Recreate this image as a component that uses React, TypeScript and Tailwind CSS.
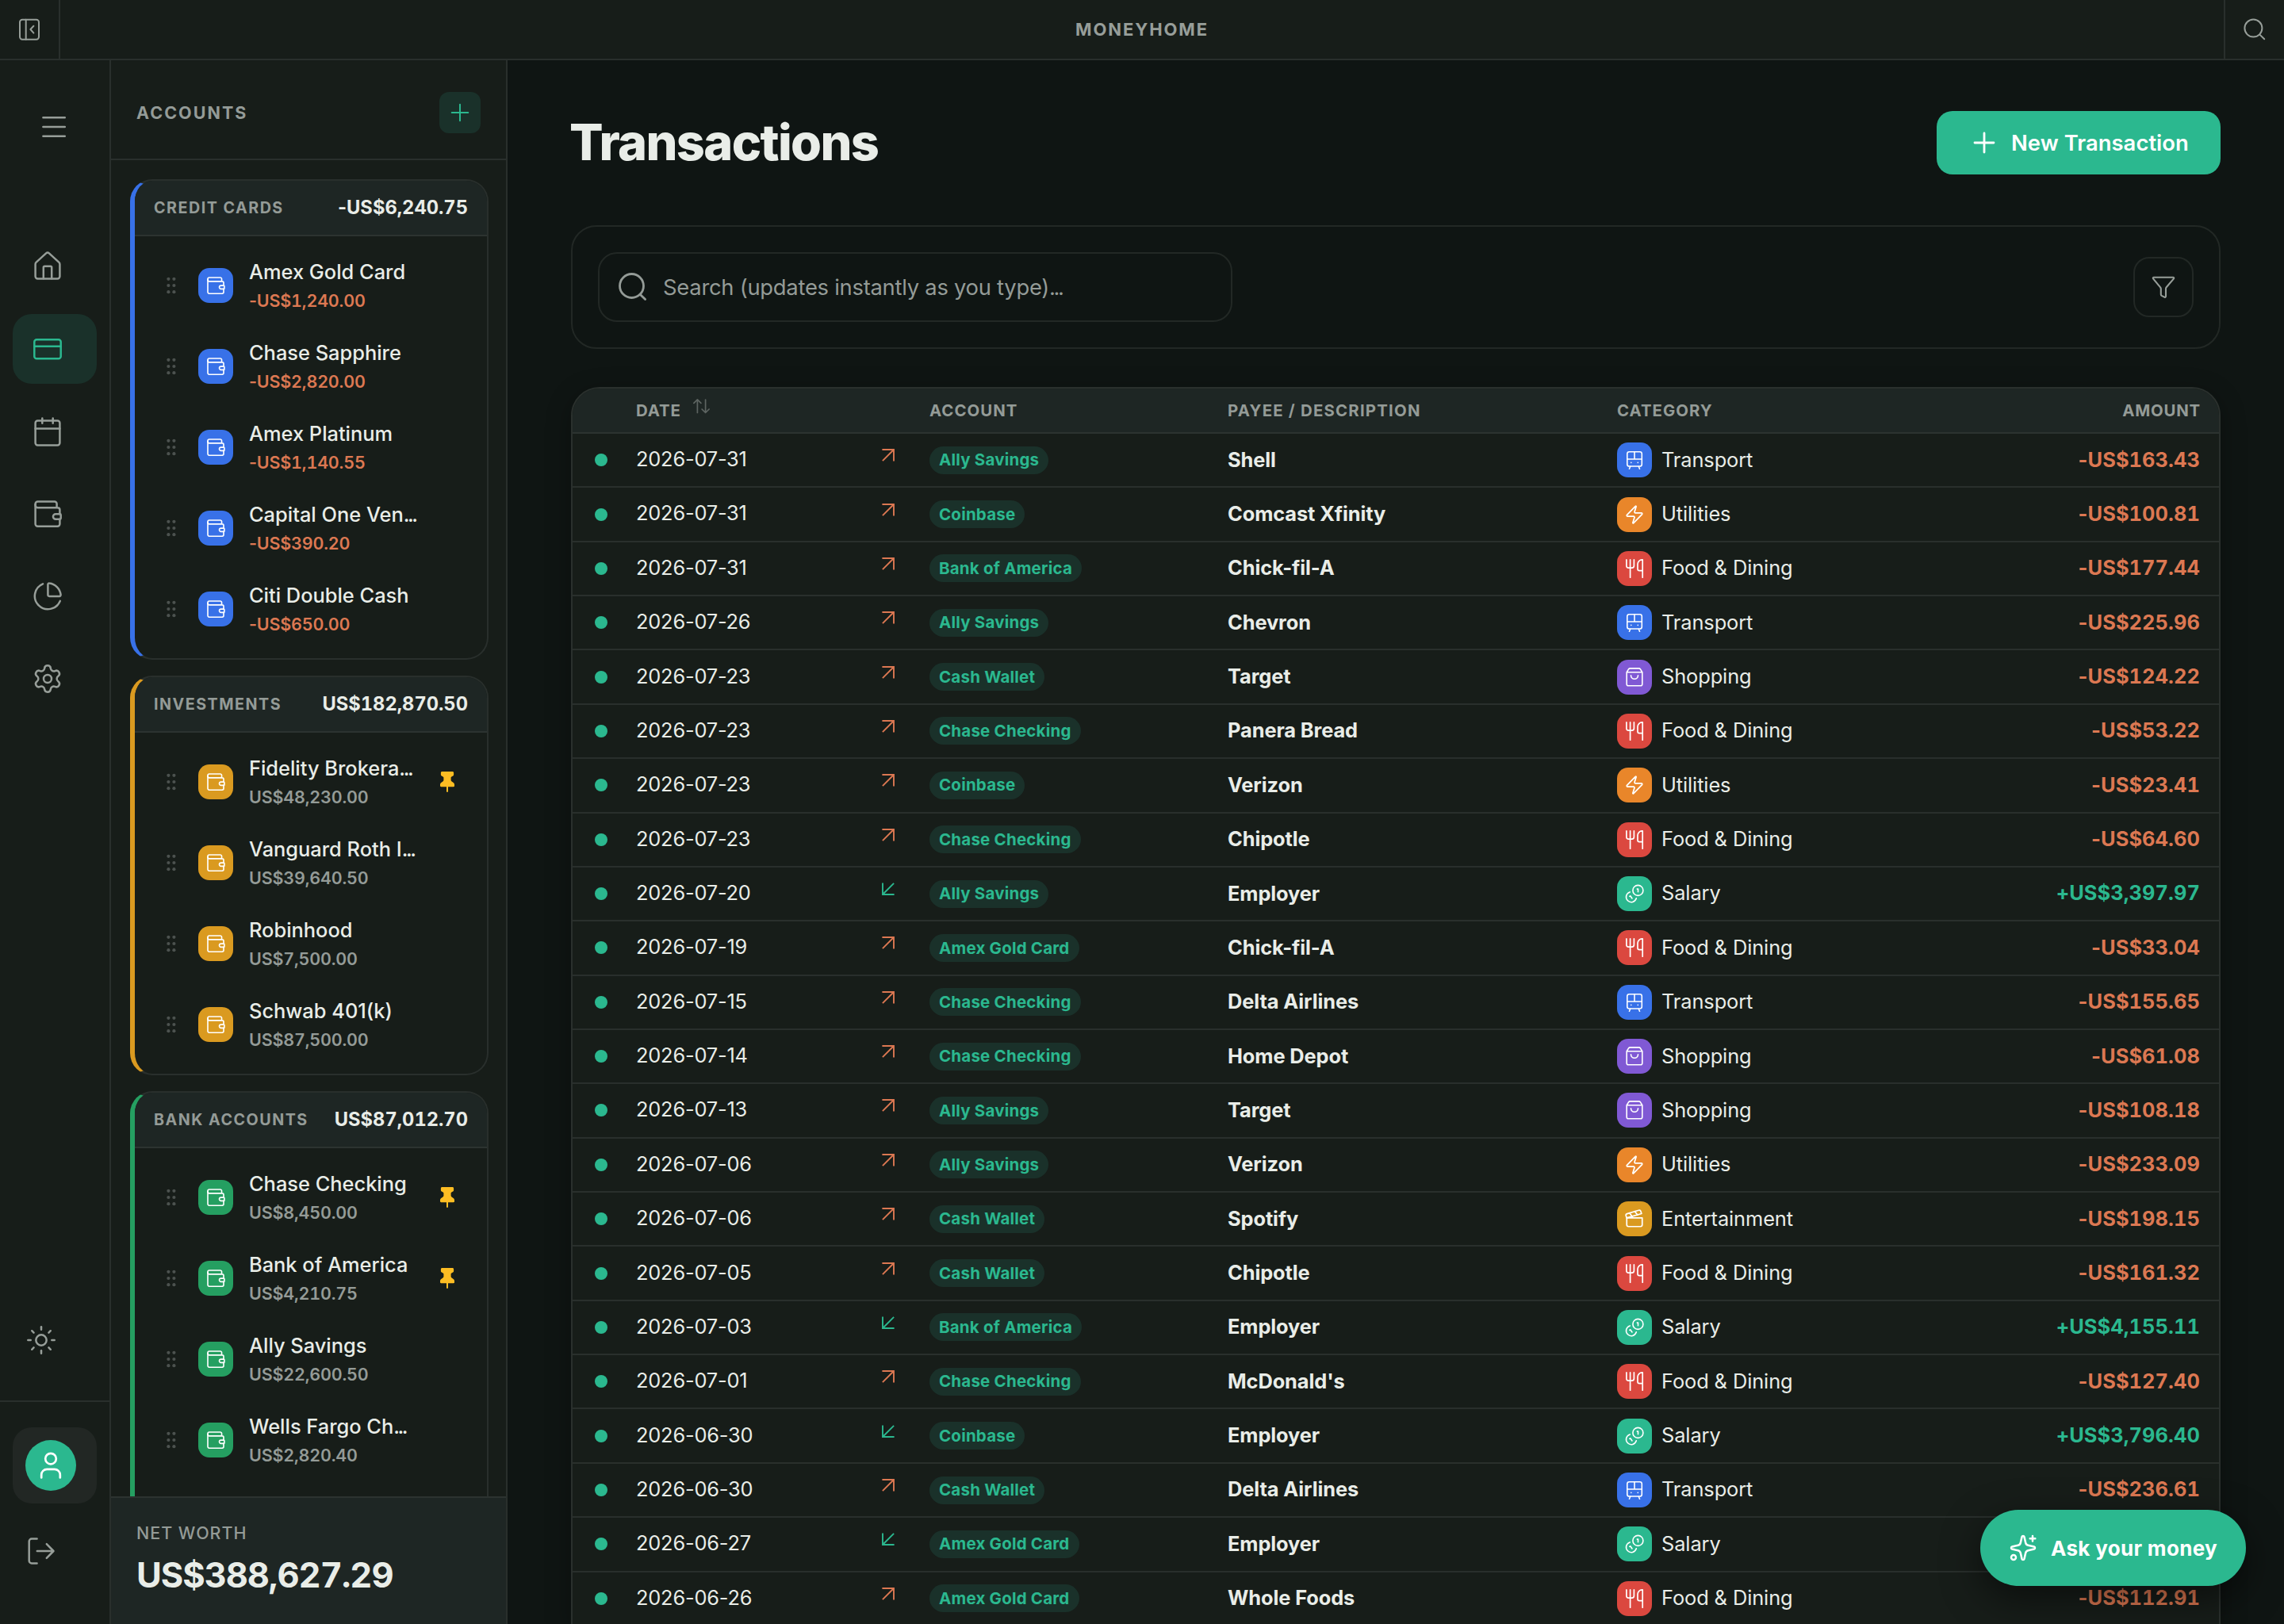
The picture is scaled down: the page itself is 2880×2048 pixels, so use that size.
import type { ReactNode } from "react";
import { Clapperboard, Settings, Sun, Zap } from "lucide-react";

type IconProps = { className?: string };

function Svg({ box, sw, className, children }: { box: string; sw: number; className?: string; children: ReactNode }) {
  return (
    <svg viewBox={box} fill="none" stroke="currentColor" strokeWidth={sw} strokeLinecap="round" strokeLinejoin="round" className={className}>
      {children}
    </svg>
  );
}

/* ---------- interface icons ---------- */

const PanelIcon = ({ className }: IconProps) => (
  <Svg box="0 0 32 32" sw={2} className={className}>
    <rect x="4" y="3.8" width="24" height="25" rx="3.2" />
    <path d="M11.7 3.8v25" />
    <path d="M21.4 11.8 17.4 16l4 4.6" />
  </Svg>
);

const SearchSmall = ({ className }: IconProps) => (
  <Svg box="0 0 32 32" sw={2} className={className}>
    <circle cx="14.4" cy="14.6" r="11" />
    <path d="m22.4 22.6 5.8 5.6" />
  </Svg>
);

const SearchLarge = ({ className }: IconProps) => (
  <Svg box="0 0 40 40" sw={2.8} className={className}>
    <circle cx="18.5" cy="18.5" r="15" />
    <path d="m29.4 29.4 6.2 6.2" />
  </Svg>
);

const MenuIcon = ({ className }: IconProps) => (
  <Svg box="0 0 40 40" sw={2.5} className={className}>
    <path d="M6.4 8.3h27.4M6.4 20h27.4M6.4 31.7h27.4" />
  </Svg>
);

const HomeIcon = ({ className }: IconProps) => (
  <Svg box="0 0 40 40" sw={2.5} className={className}>
    <path d="M4.6 17.2c0-1 .4-1.9 1.2-2.6L18.1 3.4a2.8 2.8 0 0 1 3.8 0l12.3 11.2c.8.7 1.2 1.6 1.2 2.6v15.3a2.9 2.9 0 0 1-2.9 2.9h-25a2.9 2.9 0 0 1-2.9-2.9z" />
    <path d="M14.8 35.2V21.4c0-.9.7-1.6 1.6-1.6h7.2c.9 0 1.6.7 1.6 1.6v13.8" />
  </Svg>
);

const CardIcon = ({ className }: IconProps) => (
  <Svg box="0 0 40 40" sw={2.5} className={className}>
    <rect x="3.3" y="8.3" width="33.4" height="24" rx="2.9" />
    <path d="M3.3 16.8h33.4" />
  </Svg>
);

const CalendarIcon = ({ className }: IconProps) => (
  <Svg box="0 0 40 40" sw={2.5} className={className}>
    <rect x="4.6" y="6.6" width="30.8" height="30.8" rx="2.9" />
    <path d="M4.6 16.4h30.8M13.3 3.4v6.4M26.7 3.4v6.4" />
  </Svg>
);

const WalletIcon = ({ className }: IconProps) => (
  <Svg box="0 0 40 40" sw={2.5} className={className}>
    <path d="M31.6 12.2V7.4a2.8 2.8 0 0 0-2.8-2.8H7.6a3 3 0 0 0-3 3v1.6a3 3 0 0 0 3 3h25a2.8 2.8 0 0 1 2.8 2.8v5.2" />
    <path d="M4.6 8v24.8a2.9 2.9 0 0 0 2.9 2.9h25a2.9 2.9 0 0 0 2.9-2.9v-6" />
    <path d="M35.6 20.2h-5.4a3.2 3.2 0 1 0 0 6.5h5.4c.6 0 1.1-.5 1.1-1.1v-4.3c0-.6-.5-1.1-1.1-1.1z" />
  </Svg>
);

const PieIcon = ({ className }: IconProps) => (
  <Svg box="0 0 40 40" sw={2.5} className={className}>
    <path d="M14 4.3a16.6 16.6 0 1 0 21.8 21.6" />
    <path d="M20.4 5.1c0-1 .8-1.8 1.8-1.6 7.7.9 13.5 7 14.4 14.5.1 1-.7 1.9-1.7 1.9H22.2c-1 0-1.8-.8-1.8-1.8z" />
  </Svg>
);

const UserIcon = ({ className }: IconProps) => (
  <Svg box="0 0 40 40" sw={2.7} className={className}>
    <circle cx="20" cy="11.6" r="6.8" />
    <path d="M8.2 35.4v-3.6a7 7 0 0 1 7-7h9.6a7 7 0 0 1 7 7v3.6" />
  </Svg>
);

const LogoutIcon = ({ className }: IconProps) => (
  <Svg box="0 0 40 40" sw={2.5} className={className}>
    <path d="M14.6 4.6H7.9A3.2 3.2 0 0 0 4.7 7.8v24.4a3.2 3.2 0 0 0 3.2 3.2h6.7M14.8 20h20.6M26.8 11.2l8.7 8.8-8.7 8.8" />
  </Svg>
);

const PlusIcon = ({ className, sw = 2 }: IconProps & { sw?: number }) => (
  <Svg box="0 0 28 28" sw={sw} className={className}>
    <path d="M14 2v24M2 14h24" />
  </Svg>
);

const FunnelIcon = ({ className }: IconProps) => (
  <Svg box="0 0 32 32" sw={2.1} className={className}>
    <path d="M3.8 3.8h24.4c.8 0 1.3.9.8 1.6l-9.3 10.9a3 3 0 0 0-.7 2v9.3c0 1-1.1 1.6-1.9 1.1l-3.4-1.9a1.9 1.9 0 0 1-.9-1.6v-6.9c0-.7-.3-1.4-.7-2L3 5.4c-.5-.7 0-1.6.8-1.6z" />
  </Svg>
);

const SortIcon = ({ className }: IconProps) => (
  <Svg box="0 0 22 20" sw={1.7} className={className}>
    <path d="M5.4 17.5V1.2M.9 5.4l4.5-4.5 4.5 4.5M15.6 1v16.3M11.1 13l4.5 4.5 4.5-4.5" />
  </Svg>
);

const ArrowOut = ({ className }: IconProps) => (
  <svg viewBox="0 0 16 16" fill="none" stroke="currentColor" strokeWidth="1.9" className={className}>
    <path d="M.4 1H15v14.6M15 1 .9 15.1" />
  </svg>
);

const ArrowIn = ({ className }: IconProps) => (
  <svg viewBox="0 0 16 16" fill="none" stroke="currentColor" strokeWidth="1.9" className={className}>
    <path d="M15.6 15H1V.4M1 15 15.1.9" />
  </svg>
);

const SparkleIcon = ({ className }: IconProps) => (
  <Svg box="0 0 36 36" sw={2.5} className={className}>
    <path d="M16.5 4.1c.4-1.5 2.6-1.5 3 0l1.7 7.5c.4 1.7 1.5 2.8 3.2 3.2l7.5 1.7c1.5.4 1.5 2.6 0 3l-7.5 1.7c-1.7.4-2.8 1.5-3.2 3.2l-1.7 7.5c-.4 1.5-2.6 1.5-3 0l-1.7-7.5c-.4-1.7-1.5-2.8-3.2-3.2l-7.5-1.7c-1.5-.4-1.5-2.6 0-3l7.5-1.7c1.7-.4 2.8-1.5 3.2-3.2z" />
    <path d="M30 3v6.6M26.7 6.3h6.6" />
    <circle cx="6" cy="30" r="3" />
  </Svg>
);

const PinIcon = ({ className }: IconProps) => (
  <svg viewBox="0 0 18 26" fill="currentColor" className={className}>
    <path d="M2.6 0h12.8c1.1 0 1.7.7 1.7 1.7v2.2c0 .8-.4 1.3-1 1.6l-1.7.9c-.5.3-.8.7-.8 1.2v3.2c0 .6.2 1 .7 1.4l2.4 1.8c.9.7 1.3 1.5 1.3 2.6v1.5c0 .8-.4 1.2-1.2 1.2H10v6l-1 .9-1-.9v-6H1.2C.4 19.3 0 18.9 0 18.1v-1.5c0-1.1.4-1.9 1.3-2.6l2.4-1.8c.5-.4.7-.8.7-1.4V7.6c0-.5-.3-.9-.8-1.2l-1.7-.9c-.6-.3-1-.8-1-1.6V1.7C.9.7 1.5 0 2.6 0z" />
  </svg>
);

const GripIcon = ({ className }: IconProps) => (
  <svg viewBox="0 0 12 22" fill="currentColor" className={className}>
    {[2.8, 11, 19.2].map((y) => [2.4, 9.4].map((x) => <circle key={`${x}-${y}`} cx={x} cy={y} r="2.1" />))}
  </svg>
);

/* ---------- category icons ---------- */

const BusIcon = ({ className }: IconProps) => (
  <Svg box="0 0 26 26" sw={1.6} className={className}>
    <rect x="3.8" y="2.7" width="18.5" height="18.3" rx="2.6" />
    <path d="M3.8 12h18.5M13 2.7V12M8.8 16.4v.01M17.3 16.4v.01M7.7 21.3l-1.2 2.9M18.3 21.3l1.2 2.9" />
  </Svg>
);

const BagIcon = ({ className }: IconProps) => (
  <Svg box="0 0 26 26" sw={1.6} className={className}>
    <path d="M3.2 6.6v15.2c0 1.1.9 2 2 2h15.6c1.1 0 2-.9 2-2V6.6l-2.5-3.8c-.4-.6-.9-.9-1.6-.9H7.3c-.7 0-1.2.3-1.6.9zM3.2 6.7h19.6" />
    <path d="M8.5 10.8a4.5 4.5 0 0 0 9 0" />
  </Svg>
);

const ForkIcon = ({ className }: IconProps) => (
  <Svg box="0 0 26 26" sw={1.7} className={className}>
    <path d="M2.9 1.9v7.6a2.6 2.6 0 0 0 2.6 2.6h4.3a2.6 2.6 0 0 0 2.6-2.6V1.9M7.6 1.9v22.3" />
    <path d="M23.2 24.2V1.9h-.6c-3.1 0-5.6 2.5-5.6 5.6v6.1c0 1.2.9 2.1 2.1 2.1h4.1" />
  </Svg>
);

const CoinsIcon = ({ className }: IconProps) => (
  <Svg box="0 0 26 26" sw={1.6} className={className}>
    <circle cx="17.4" cy="8.9" r="6.5" />
    <path d="M7.2 10.9a6.5 6.5 0 1 0 8.1 7.9" />
    <path d="M16.3 7.1h1.2v3.7M6.8 16.4l.9-.6 2.3 3.1" />
  </Svg>
);

/* ---------- data ---------- */

type Account = { name: string; cut?: boolean; amount: string; pinned?: boolean };
type Group = { title: string; total: string; edge: string; tile: string; open?: boolean; items: Account[] };

const groups: Group[] = [
  {
    title: "CREDIT CARDS",
    total: "-US$6,240.75",
    edge: "border-l-[#3871e8]",
    tile: "bg-[#3871e8]",
    items: [
      { name: "Amex Gold Card", amount: "-US$1,240.00" },
      { name: "Chase Sapphire", amount: "-US$2,820.00" },
      { name: "Amex Platinum", amount: "-US$1,140.55" },
      { name: "Capital One Ven", cut: true, amount: "-US$390.20" },
      { name: "Citi Double Cash", amount: "-US$650.00" },
    ],
  },
  {
    title: "INVESTMENTS",
    total: "US$182,870.50",
    edge: "border-l-[#da9a20]",
    tile: "bg-[#da9a20]",
    items: [
      { name: "Fidelity Brokera", cut: true, amount: "US$48,230.00", pinned: true },
      { name: "Vanguard Roth I", cut: true, amount: "US$39,640.50" },
      { name: "Robinhood", amount: "US$7,500.00" },
      { name: "Schwab 401(k)", amount: "US$87,500.00" },
    ],
  },
  {
    title: "BANK ACCOUNTS",
    total: "US$87,012.70",
    edge: "border-l-[#259f61]",
    tile: "bg-[#259f61]",
    open: true,
    items: [
      { name: "Chase Checking", amount: "US$8,450.00", pinned: true },
      { name: "Bank of America", amount: "US$4,210.75", pinned: true },
      { name: "Ally Savings", amount: "US$22,600.50" },
      { name: "Wells Fargo Ch", cut: true, amount: "US$2,820.40" },
    ],
  },
];

type Category = "Transport" | "Utilities" | "Food & Dining" | "Shopping" | "Salary" | "Entertainment";

const categoryStyle: Record<Category, { tile: string; icon: ReactNode }> = {
  Transport: { tile: "bg-[#3871e8]", icon: <BusIcon className="size-[26px]" /> },
  Utilities: { tile: "bg-[#e9862a]", icon: <Zap className="size-[26px]" strokeWidth={1.6} /> },
  "Food & Dining": { tile: "bg-[#db483f]", icon: <ForkIcon className="size-[26px]" /> },
  Shopping: { tile: "bg-[#8059d4]", icon: <BagIcon className="size-[26px]" /> },
  Salary: { tile: "bg-[#2bb88f]", icon: <CoinsIcon className="size-[26px]" /> },
  Entertainment: { tile: "bg-[#da9a20]", icon: <Clapperboard className="size-[26px]" strokeWidth={1.6} /> },
};

const rows: [string, string, string, Category, string][] = [
  ["2026-07-31", "Ally Savings", "Shell", "Transport", "-US$163.43"],
  ["2026-07-31", "Coinbase", "Comcast Xfinity", "Utilities", "-US$100.81"],
  ["2026-07-31", "Bank of America", "Chick-fil-A", "Food & Dining", "-US$177.44"],
  ["2026-07-26", "Ally Savings", "Chevron", "Transport", "-US$225.96"],
  ["2026-07-23", "Cash Wallet", "Target", "Shopping", "-US$124.22"],
  ["2026-07-23", "Chase Checking", "Panera Bread", "Food & Dining", "-US$53.22"],
  ["2026-07-23", "Coinbase", "Verizon", "Utilities", "-US$23.41"],
  ["2026-07-23", "Chase Checking", "Chipotle", "Food & Dining", "-US$64.60"],
  ["2026-07-20", "Ally Savings", "Employer", "Salary", "+US$3,397.97"],
  ["2026-07-19", "Amex Gold Card", "Chick-fil-A", "Food & Dining", "-US$33.04"],
  ["2026-07-15", "Chase Checking", "Delta Airlines", "Transport", "-US$155.65"],
  ["2026-07-14", "Chase Checking", "Home Depot", "Shopping", "-US$61.08"],
  ["2026-07-13", "Ally Savings", "Target", "Shopping", "-US$108.18"],
  ["2026-07-06", "Ally Savings", "Verizon", "Utilities", "-US$233.09"],
  ["2026-07-06", "Cash Wallet", "Spotify", "Entertainment", "-US$198.15"],
  ["2026-07-05", "Cash Wallet", "Chipotle", "Food & Dining", "-US$161.32"],
  ["2026-07-03", "Bank of America", "Employer", "Salary", "+US$4,155.11"],
  ["2026-07-01", "Chase Checking", "McDonald's", "Food & Dining", "-US$127.40"],
  ["2026-06-30", "Coinbase", "Employer", "Salary", "+US$3,796.40"],
  ["2026-06-30", "Cash Wallet", "Delta Airlines", "Transport", "-US$236.61"],
  ["2026-06-27", "Amex Gold Card", "Employer", "Salary", ""],
  ["2026-06-26", "Amex Gold Card", "Whole Foods", "Food & Dining", "-US$112.91"],
];

/* Digits are tabular; the minus sign keeps its proportional width. */
function Money({ value, className }: { value: string; className?: string }) {
  const negative = value.startsWith("-");
  return (
    <span className={className}>
      {negative && "-"}
      <span className="tabular-nums">{negative ? value.slice(1) : value}</span>
    </span>
  );
}

const Dots = () => <span className="tracking-[-2.4px]">...</span>;

/* ---------- layout ---------- */

function TopBar() {
  return (
    <header className="flex h-[76px] shrink-0 items-stretch border-b-2 border-[#292f2c] bg-[#171d19] text-[#979e99]">
      <div className="flex w-[76px] items-center justify-center border-r-2 border-[#292f2c]">
        <PanelIcon className="size-8" />
      </div>
      <div className="flex flex-1 items-center justify-center text-[22px] font-[650] tracking-[1.9px]">
        <span>MONEYHOME</span>
      </div>
      <div className="flex w-[76px] items-center justify-center border-l-2 border-[#292f2c]">
        <SearchSmall className="size-8" />
      </div>
    </header>
  );
}

function Rail() {
  return (
    <nav className="flex w-[140px] shrink-0 flex-col border-r-2 border-[#292f2c] bg-[#171d19] text-[#979e99]">
      <div className="mt-16 ml-12 h-10">
        <MenuIcon className="size-10" />
      </div>
      <div className="mt-28 flex flex-col gap-4 px-4 [&>div]:flex [&>div]:h-[88px] [&>div]:items-center [&>div]:rounded-3xl [&>div]:pl-6">
        <div><HomeIcon className="size-10" /></div>
        <div className="bg-[#1a312a] text-[#2bb88f]"><CardIcon className="size-10" /></div>
        <div><CalendarIcon className="size-10" /></div>
        <div><WalletIcon className="size-10" /></div>
        <div><PieIcon className="size-10" /></div>
        <div><Settings className="size-10" strokeWidth={1.5} /></div>
      </div>
      <div className="mt-auto mb-8 flex h-[88px] items-center pl-8">
        <Sun className="size-10" strokeWidth={1.5} />
      </div>
      <div className="flex h-[282px] flex-col gap-4 border-t-2 border-[#292f2c] px-4 pt-8">
        <div className="flex h-24 items-center rounded-3xl bg-[#222724] pl-4">
          <div className="flex size-16 items-center justify-center rounded-full bg-[#2bb88f] text-white">
            <UserIcon className="size-10" />
          </div>
        </div>
        <div className="flex h-[88px] items-center pl-4">
          <LogoutIcon className="size-10" />
        </div>
      </div>
    </nav>
  );
}

function GroupCard({ group }: { group: Group }) {
  return (
    <section className={`shrink-0 overflow-hidden rounded-[28px] border-2 border-l-[6px] border-[#292f2c] ${group.edge} ${group.open ? "pb-28" : ""}`}>
      <div className="flex h-[70px] items-center justify-between border-b-2 border-[#2c3330] bg-[#1e2624] px-6">
        <span className="mt-px text-[19.7px] font-[650] tracking-[1.5px] text-[#949b97]">{group.title}</span>
        <Money value={group.total} className="text-[23.7px] font-[650] text-[#e9ede8]" />
      </div>
      <div className="flex flex-col gap-[2px] py-3">
        {group.items.map((a) => (
          <div key={a.name} className="flex h-[100px] items-center">
            <GripIcon className="ml-10 h-[22px] w-3 text-[#4c524f]" />
            <div className={`ml-7 flex size-11 items-center justify-center rounded-[14px] text-white ${group.tile}`}>
              <WalletIcon className="size-[26px]" />
            </div>
            <div className="ml-5 w-[241px]">
              <div className="mt-px text-[25.4px] leading-9 font-medium whitespace-nowrap text-[#e9ede8]">
                {a.name}
                {a.cut && <Dots />}
              </div>
              <div className={`text-[21.5px] leading-9 font-[570] tracking-[-0.18px] ${a.amount.startsWith("-") ? "text-[#dc7852]" : "text-[#949b97]"}`}>
                <Money value={a.amount} />
              </div>
            </div>
            {a.pinned && <PinIcon className="h-[26px] w-[18px] text-[#fdbd23]" />}
          </div>
        ))}
      </div>
    </section>
  );
}

function Sidebar() {
  return (
    <aside className="flex w-[500px] shrink-0 flex-col border-r-2 border-[#292f2c] bg-[#171d19]">
      <div className="flex h-[126px] shrink-0 items-center justify-between border-b-2 border-[#292f2c] pt-2 pr-8 pl-8">
        <span className="text-[21.5px] font-[650] tracking-[2.05px] text-[#949b97]">ACCOUNTS</span>
        <div className="flex size-[52px] items-center justify-center rounded-xl bg-[#1a312a] text-[#2bb88f]">
          <PlusIcon className="size-6" sw={2.3} />
        </div>
      </div>
      <div className="flex min-h-0 flex-1 flex-col gap-5 overflow-hidden pt-6 pr-[22px] pl-6">
        {groups.map((g) => (
          <GroupCard key={g.title} group={g} />
        ))}
      </div>
      <div className="flex h-[161px] shrink-0 flex-col border-t-2 border-[#2c3330] bg-[#1e2624] px-8 pt-7">
        <span className="text-[21.5px] leading-8 font-[550] tracking-[0.95px] text-[#949b97]">NET WORTH</span>
        <span className="mt-[9px] text-[43.5px] leading-[56px] font-[650] tracking-[-1.05px] text-[#e9ede8] tabular-nums">US$388,627.29</span>
      </div>
    </aside>
  );
}

function TransactionTable() {
  return (
    <div className="mt-12 shrink-0 overflow-hidden rounded-t-[36px] border-2 border-[#2a302d] bg-[#171d19] shadow-[0_8px_32px_rgba(0,0,0,0.3)]">
      <div className="grid h-[57px] grid-cols-[80px_300px_70px_376px_491px_1fr] items-center border-b-2 border-[#2c3330] bg-[#1e2624] pt-px pr-6 text-[20.4px] font-[650] tracking-[1.2px] text-[#949b97]">
        <span />
        <div className="flex items-center">
          <span className="tracking-[0.9px]">DATE</span>
          <SortIcon className="mb-[10px] ml-[15px] h-5 w-[22px] text-[#5d6461]" />
        </div>
        <span />
        <span className="tracking-[1px]">ACCOUNT</span>
        <span>PAYEE / DESCRIPTION</span>
        <span className="flex justify-between"><span className="tracking-[1px]">CATEGORY</span><span className="-mr-px tracking-[0.8px]">AMOUNT</span></span>
      </div>
      {rows.map(([date, account, payee, category, amount], i) => {
        const income = category === "Salary";
        return (
          <div key={i} className="grid h-[68.36px] grid-cols-[80px_300px_70px_376px_491px_1fr] items-center border-b-2 border-[#292f2c] pr-6 text-[25.4px] text-[#e9ede8]">
            <span className="ml-7 size-4 rounded-full bg-[#2bb88f]" />
            <span className="mb-[2px] tracking-[-0.2px]">{date}</span>
            {income ? <ArrowIn className="mb-3 ml-[10px] size-4 text-[#2bb88f]" /> : <ArrowOut className="mb-3 ml-[10px] size-4 text-[#dc7852]" />}
            <div className="flex">
              <span className="flex h-[35px] items-center rounded-full bg-[#1a312a] px-3 pt-px text-[20.5px] font-[650] tracking-[0.2px] text-[#2bb88f]">{account}</span>
            </div>
            <span className="mb-px font-[650] tracking-[-0.1px]">{payee}</span>
            <div className="flex items-center">
              <div className={`flex size-11 items-center justify-center rounded-[14px] text-white ${categoryStyle[category].tile}`}>
                {categoryStyle[category].icon}
              </div>
              <span className="mb-px ml-3 flex-1 tracking-[-0.1px]">{category}</span>
              <Money value={amount} className={`mb-px font-[650] tracking-[0.08px] ${income ? "text-[#2bb88f]" : "text-[#dc7852]"}`} />
            </div>
          </div>
        );
      })}
    </div>
  );
}

export default function App() {
  return (
    <div className="relative flex h-[2048px] w-[2880px] flex-col overflow-hidden bg-[#0f1513] font-['Inter',sans-serif]">
      <TopBar />
      <div className="flex min-h-0 flex-1">
        <Rail />
        <Sidebar />
        <main className="flex min-w-0 flex-1 flex-col overflow-hidden px-20 pt-16">
          <div className="flex h-20 shrink-0 items-center justify-between">
            <h1 className="mb-[2px] text-[63px] leading-none font-extrabold tracking-[-1.65px] text-[#e9ede8]">
              <span className="-ml-[2px]">Transactions</span>
            </h1>
            <button className="flex h-20 w-[358px] items-center rounded-[20px] bg-[#2bb88f] pl-[46px] text-white">
              <PlusIcon className="size-7" sw={2.8} />
              <span className="mt-px ml-[20px] text-[27.4px] font-semibold tracking-[0.05px]">New Transaction</span>
            </button>
          </div>
          <div className="mt-16 flex h-[156px] shrink-0 items-center justify-between rounded-[32px] border-2 border-[#222825] px-8">
            <div className="flex h-[88px] w-[800px] items-center rounded-3xl border-2 border-[#222825] pl-[22px] text-[#949b97]">
              <SearchLarge className="size-10" />
              <span className="mt-px ml-[18px] text-[27.4px] tracking-[-0.27px]">
                Search (updates instantly as you type)
                <Dots />
              </span>
            </div>
            <div className="flex size-[76px] items-center justify-center rounded-[20px] border-2 border-[#222825] text-[#979e99]">
              <FunnelIcon className="size-8" />
            </div>
          </div>
          <TransactionTable />
        </main>
      </div>
      <button className="absolute right-12 bottom-12 flex h-24 w-[335px] items-center rounded-full bg-[#2bb88f] pl-9 text-white shadow-[0_16px_48px_rgba(0,0,0,0.5)]">
        <SparkleIcon className="size-9" />
        <span className="mt-px ml-[17px] text-[26px] font-[650] tracking-[0.32px]">Ask your money</span>
      </button>
    </div>
  );
}
